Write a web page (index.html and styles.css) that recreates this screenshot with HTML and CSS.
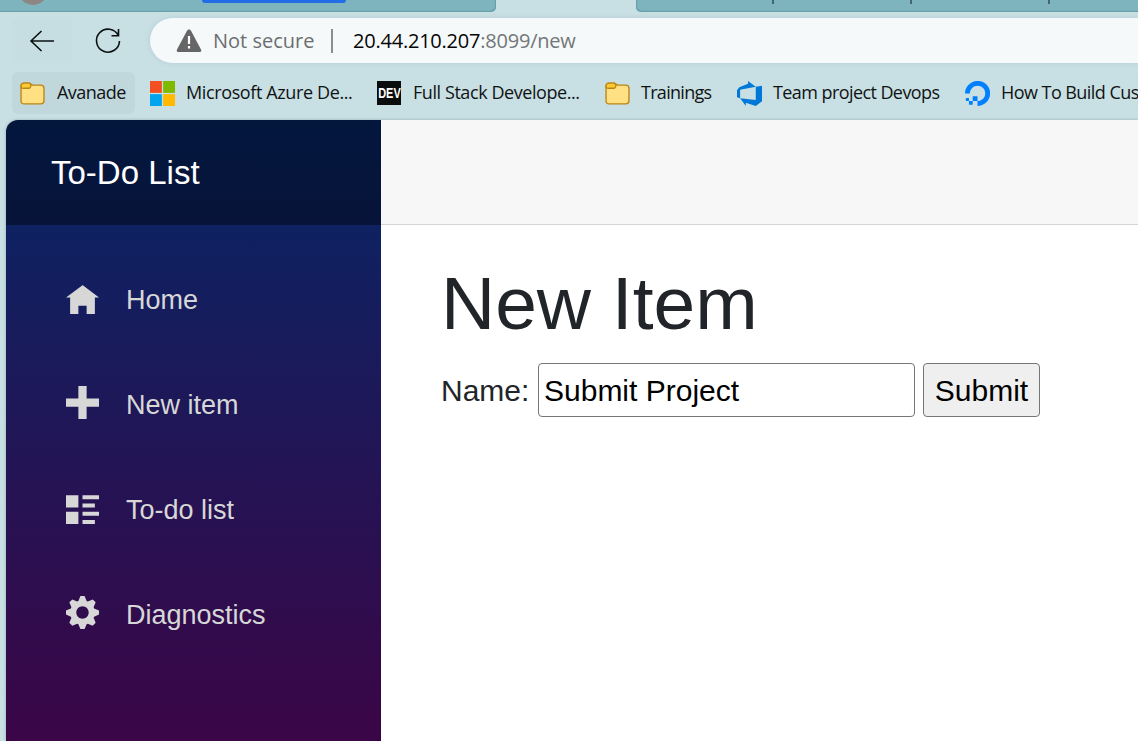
FILE: index.html
```
<!DOCTYPE html>
<html lang="en">
<head>
<meta charset="utf-8">
<title>New Item</title>
<link rel="stylesheet" href="styles.css">
</head>
<body>
<div class="browser">
  <div class="tabs">
    <div class="tabs-left"><span class="avatar"></span><span class="group-line"></span></div>
    <div class="tabs-right"><i></i><i></i><i></i></div>
  </div>
  <div class="toolbar">
    <div class="back"><svg width="26" height="24" viewBox="0 0 26 24"><path d="M25 12H2M12.500 2L2 12l10.500 10"/></svg></div>
    <svg class="reload" width="28" height="28" viewBox="0 0 28 28"><path d="M24.300 8.500A11.500 11.500 0 1 0 25.500 14M24.500 2v6.700h-7"/></svg>
    <div class="address">
      <svg class="warn" width="26" height="24" viewBox="0 0 26 24"><path d="M11 1.800q2-3.300 4 0l10 18.800q1 2.400-1.500 2.400h-21q-2.500 0-1.500-2.400z" fill="#666"/><path d="M13 7v8M13 17v2.500" stroke="#fff" stroke-width="2.200"/></svg>
      <span class="not-secure">Not secure</span><span class="divider"></span>
      <span class="url"><b>20.44.210.207</b>:8099/new</span>
    </div>
  </div>
  <div class="bookmarks">
    <div class="bookmark active"><svg viewBox="0 0 24 24"><path class="folder" d="M1 5q0-3 3-3h5l3 2h8q3 0 3 3v12q0 3-3 3H4q-3 0-3-3z"/><path class="flap" d="M1 5q0-3 3-3h5q3 2.500 0 5H4Q1 7.500 1 5z"/></svg><span class="avanade">Avanade</span></div>
    <div class="bookmark azure"><svg viewBox="0 0 24 24"><path fill="#f25022" d="M0 0h11.400v11.400H0z"/><path fill="#7fba00" d="M12.600 0H24v11.400H12.600z"/><path fill="#00a4ef" d="M0 12.600h11.400V24H0z"/><path fill="#ffb900" d="M12.600 12.600H24V24H12.600z"/></svg><span>Microsoft Azure De...</span></div>
    <div class="bookmark dev"><span class="dev-logo"><span>DEV</span></span><span>Full Stack Develope...</span></div>
    <div class="bookmark trainings"><svg viewBox="0 0 24 24"><path class="folder" d="M1 5q0-3 3-3h5l3 2h8q3 0 3 3v12q0 3-3 3H4q-3 0-3-3z"/><path class="flap" d="M1 5q0-3 3-3h5q3 2.500 0 5H4Q1 7.500 1 5z"/></svg><span>Trainings</span></div>
    <div class="bookmark devops"><svg viewBox="0 0 24 24"><path fill="#0078d7" d="M0 8.900L2.200 6l8.400-3.400V0l7.400 5.400L3 8.300v8.200l-3-.9zM24 4.500v15L18 24l-9.500-3.200V24L3 16.500l15 1.800V5.400z"/></svg><span>Team project Devops</span></div>
    <div class="bookmark ocean"><svg viewBox="0 0 24 24"><path fill="#0080ff" d="M12 24v-4.700c5 0 8.800-4.900 6.900-10.100-.7-1.900-2.200-3.400-4.100-4.100C9.600 3.200 4.700 7 4.700 12H0C0 4.100 7.700-2.100 16 .5c3.600 1.100 6.400 4 7.500 7.500C26.100 16.300 20 24 12 24z"/><path fill="#0080ff" d="M7.400 14.700H12v4.600H7.400zM3.800 19.300h3.600v3.600H3.800zM.8 16.300h3v3h-3z"/></svg><span>How To Build Cus</span></div>
  </div>
</div>
<div class="page">
  <aside class="sidebar">
    <div class="brand">To-Do List</div>
    <nav>
      <a><svg viewBox="0 0 8 8"><path transform="translate(0 1)" d="M4 0l-4 3h1v4h2v-2h2v2h2v-4.030l1 .03-4-3z"/></svg>Home</a>
      <a><svg viewBox="0 0 8 8"><path d="M3 0v3h-3v2h3v3h2v-3h3v-2h-3v-3h-2z"/></svg>New item</a>
      <a><svg viewBox="0 0 8 8"><path transform="translate(0 1)" d="M0 0v3h3v-3h-3zm4 0v1h4v-1h-4zm0 2v1h3v-1h-3zm-4 2v3h3v-3h-3zm4 0v1h4v-1h-4zm0 2v1h3v-1h-3z"/></svg>To-do list</a>
      <a><svg viewBox="0 0 8 8"><path d="M3.500 0l-.5 1.190c-.1.030-.19.080-.28.130l-1.190-.5-.72.720.5 1.190c-.05.1-.09.180-.13.280l-1.190.5v1l1.190.5c.04.1.080.180.130.280l-.5 1.190.72.720 1.190-.5c.09.040.180.090.280.130l.5 1.190h1l.5-1.190c.09-.04.190-.08.280-.13l1.190.5.720-.72-.5-1.190c.04-.09.090-.19.130-.28l1.190-.5v-1l-1.190-.5c-.03-.09-.08-.19-.13-.28l.5-1.190-.72-.72-1.190.5c-.09-.04-.19-.09-.28-.13l-.5-1.190h-1zm.5 2.500c.83 0 1.500.67 1.500 1.500s-.67 1.500-1.500 1.500-1.500-.67-1.500-1.500.67-1.500 1.500-1.500z"/></svg>Diagnostics</a>
    </nav>
  </aside>
  <main>
    <div class="top-row"></div>
    <div class="content">
      <h1>New Item</h1>
      <form><label for="name">Name:</label><input id="name" value="Submit Project"><button type="button">Submit</button></form>
    </div>
  </main>
</div>
</body>
</html>
```
FILE: styles.css
```
* { box-sizing: border-box; }
body { margin: 0; height: 741px; overflow: hidden; display: flex; flex-direction: column; background: #c8dfe3; font-family: "Liberation Sans", Arial, sans-serif; }
.browser { height: 120px; flex: none; font-family: "Open Sans", "Noto Sans", sans-serif; color: #101314; overflow: hidden; }
.tabs { height: 12px; display: flex; justify-content: space-between; }
.tabs-left { width: 496px; background: #7db4be; border-radius: 0 0 5px 0; box-shadow: inset -1px -1px 1px #679da7; display: flex; align-items: flex-start; overflow: hidden; }
.avatar { width: 30px; height: 30px; border-radius: 50%; background: #8e8684; margin: -25px 0 0 18px; }
.group-line { width: 144px; height: 3px; margin-left: 154px; background: #226de6; border-radius: 0 0 4px 4px; }
.tabs-right { width: 502px; background: #7db4be; border-radius: 0 0 0 5px; box-shadow: inset 1px -1px 1px #679da7; display: flex; gap: 136px; padding-left: 136px; }
.tabs-right i { width: 2px; height: 4px; background: #42686f; }
.toolbar { height: 58px; display: flex; align-items: center; }
.back { width: 60px; height: 44px; margin-left: 12px; background: #c6dee2; display: flex; align-items: center; justify-content: center; }
.back svg, .reload { fill: none; stroke: #0d1112; stroke-width: 1.6; }
.reload { margin-left: 22px; flex: none; }
.address { flex: 1; height: 45px; margin: 0 0 1px 28px; background: #f5f9fa; border-radius: 23px 0 0 23px; box-shadow: 0 0 5px #b3ced4; display: flex; align-items: center; font-size: 20px; white-space: nowrap; }
.warn { margin-left: 26px; }
.not-secure { width: 104px; margin-left: 11px; color: #6b6e70; }
.divider { width: 2px; height: 24px; margin-left: 14px; background: #8b8e8f; }
.url { margin-left: 20px; color: #737678; letter-spacing: -.22px; }
.url b { color: #050505; font-weight: 400; }
.bookmarks { height: 46px; display: flex; margin-left: 12px; padding-top: 2px; }
.bookmark { display: flex; flex: none; height: 42px; align-items: center; gap: 11px; font-size: 18px; line-height: 24px; white-space: nowrap; letter-spacing: -.38px; }
.bookmark > span:last-child { margin-bottom: 2px; }
.bookmark svg { width: 25px; height: 25px; flex: none; }
.active { width: 123px; padding-left: 8px; background: #c0d7db; border-radius: 6px; letter-spacing: -.55px; gap: 12px; }
.azure { width: 227px; margin-left: 15px; }
.dev { width: 228px; gap: 12px; letter-spacing: -.43px; }
.trainings { width: 132px; letter-spacing: -.7px; }
.devops { width: 228px; letter-spacing: -.58px; }
.ocean { letter-spacing: -.55px; }
.folder { fill: #ffe083; stroke: #bb8513; stroke-width: 1.3; }
.flap { fill: #fbcb34; stroke: #bb8513; stroke-width: 1.3; }
.dev-logo { width: 24px; height: 24px; background: #0b0c0c; color: #fff; font: bold 15px/24px "Liberation Sans", sans-serif; letter-spacing: 0; display: flex; justify-content: center; }
.dev-logo span { transform: scaleX(.73); }
.page { flex: 1; display: flex; margin-left: 6px; background: #fff; border-radius: 12px 0 0 0; overflow: hidden; box-shadow: 0 0 3px #8ca9ae; }
.sidebar { width: 375px; flex: none; background: linear-gradient(180deg, #052767 0, #3a0647 610px); }
.brand { height: 105px; padding-left: 45px; background: rgba(0, 0, 0, .4); color: #fff; font-size: 33px; line-height: 105px; }
nav { padding: 30px 0 0 60px; display: flex; flex-direction: column; gap: 15px; }
nav a { height: 90px; display: flex; align-items: center; gap: 27px; color: #d7d7d7; font-size: 27px; line-height: 90px; }
nav svg { width: 33px; height: 33px; fill: #d7d7d7; margin-bottom: 5px; }
main { flex: 1; }
.top-row { height: 105px; background: #f7f7f7; border-bottom: 1px solid #d6d5d5; }
.content { padding: 33px 0 0 60px; color: #212529; }
h1 { margin: 0 0 15px; font-size: 75px; line-height: 90px; font-weight: 400; }
form { display: flex; align-items: center; font-size: 30px; }
label { width: 97px; padding-top: 2px; }
input, button { height: 54px; font: 30px "Liberation Sans", Arial, sans-serif; color: #000; border: 1px solid #767676; border-radius: 4px; }
input { width: 377px; padding: 2px 5px 0; background: #fff; outline: 0; }
button { width: 117px; margin-left: 8px; padding: 2px 0 0; background: #efefef; }
```
